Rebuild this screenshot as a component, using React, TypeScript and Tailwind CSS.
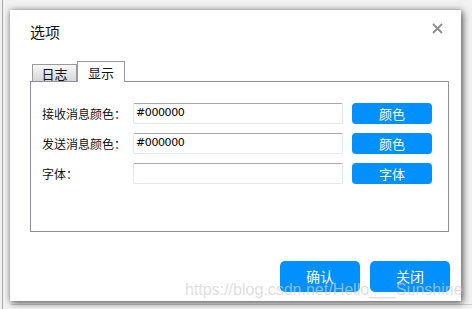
import React from "react";

const cjk = "font-['Noto_Sans_CJK_SC','Liberation_Sans',sans-serif]";

function Row({ label, value, action }: { label: string; value: string; action: string }) {
  return (
    <div className="flex items-center h-[21px]">
      <div className={`w-[91px] text-[12px] leading-none text-[#111] ${cjk}`}>{label}</div>
      <div className="w-[210px] h-[21px] border border-[#e2e8ee] border-t-[#a8a8a8] rounded-[2px] bg-white flex items-center pl-[2px] text-[11px] text-black font-['DejaVu_Sans',sans-serif] tracking-[-0.4px]">
        {value}
      </div>
      <button className={`ml-[9px] w-[80px] h-[21px] rounded-[4px] bg-[#0090ff] text-white text-[13px] leading-none ${cjk}`}>
        {action}
      </button>
    </div>
  );
}

export default function App() {
  return (
    <div className="relative w-[472px] h-[309px] overflow-hidden bg-[#f1f1f1]">
      <div className="absolute left-[2px] top-0 bottom-0 w-px bg-[#a9a9a9]" />
      <div className="absolute left-[11px] right-0 top-[304px] h-px bg-[#cfcfcf]" />
      <div className="relative pt-[10px] pl-[10px]">
        <div className="w-[451px] h-[291px] bg-white shadow-[2px_2px_7px_rgba(0,0,0,0.55),0_0_6px_rgba(0,0,0,0.25)] flex flex-col">
          {/* header */}
          <div className="flex justify-between items-start pl-[20px] pr-[18px] pt-[14px]">
            <h1 className={`text-[15px] leading-[16px] text-[#111] ${cjk}`}>选项</h1>
            <svg width="11" height="11" viewBox="0 0 11 11" className="mt-[-1px]">
              <path d="M1 1 L10 10 M10 1 L1 10" stroke="#8c8c8c" strokeWidth="1.8" />
            </svg>
          </div>

          {/* tabs */}
          <div className="ml-[20px] mt-[21px] w-[419px]">
            <div className="flex items-end pl-[2px] h-[20px]">
              <div className={`w-[45px] h-[17px] border border-b-0 border-[#9a9a9a] bg-gradient-to-b from-[#f7f7f7] to-[#d6d6d6] flex items-center justify-center text-[13px] leading-none text-[#111] ${cjk}`}>
                日志
              </div>
              <div className={`relative z-10 w-[48px] h-[21px] -mb-px border border-b-0 border-[#9a9a9a] bg-white flex items-center justify-center text-[13px] leading-none text-[#111] ${cjk}`}>
                显示
              </div>
            </div>
            <div className="h-[151px] border border-[#8f8f99] pt-[21px] pl-[11px] flex flex-col gap-[9px]">
              <Row label="接收消息颜色：" value="#000000" action="颜色" />
              <Row label="发送消息颜色：" value="#000000" action="颜色" />
              <Row label="字体：" value="" action="字体" />
            </div>
          </div>

          {/* footer */}
          <div className="flex justify-end gap-[10px] pr-[11px] mt-[29px]">
            <button className={`w-[80px] h-[31px] rounded-[5px] bg-[#0090ff] text-white text-[14px] ${cjk}`}>确认</button>
            <button className={`w-[80px] h-[31px] rounded-[5px] bg-[#0090ff] text-white text-[14px] ${cjk}`}>关闭</button>
          </div>
        </div>
      </div>
      <div className="absolute left-[185px] top-[280px] text-[16px] leading-[20px] text-[rgba(208,208,208,0.7)] font-['Liberation_Sans',sans-serif] whitespace-nowrap pointer-events-none">
        https://blog.csdn.net/Hello___Sunshine
      </div>
    </div>
  );
}
